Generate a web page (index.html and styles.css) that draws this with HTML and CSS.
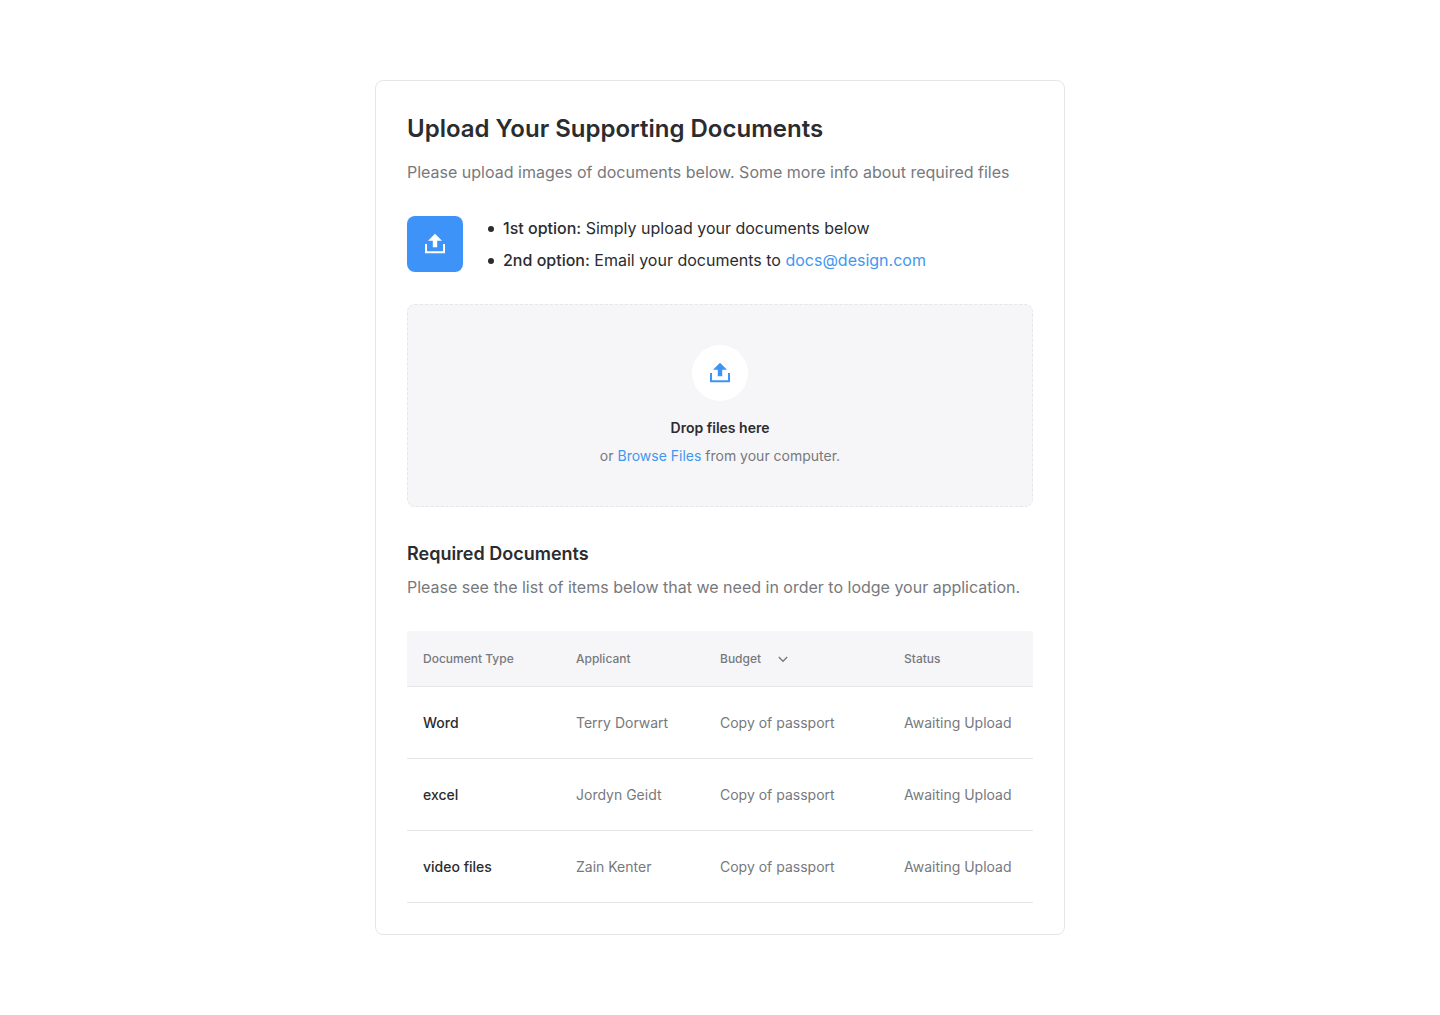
FILE: index.html
```html
<!DOCTYPE html>
<html lang="en">
<head>
<meta charset="utf-8">
<meta name="viewport" content="width=device-width, initial-scale=1">
<title>Upload Your Supporting Documents</title>
<link rel="stylesheet" href="styles.css">
</head>
<body>
<main class="card">
  <header class="intro">
    <h1 class="title">Upload Your Supporting Documents</h1>
    <p class="lead">Please upload images of documents below. Some more info about required files</p>
  </header>
  <section class="options">
    <div class="badge">
      <svg class="icon" viewBox="0 0 24 24" aria-hidden="true"><path d="M12 1.8 19 8.8H14.2V15.2H9.8V8.8H5Z" fill="currentColor"/><path d="M3 12V20.2H21V12" fill="none" stroke="currentColor" stroke-width="2"/></svg>
    </div>
    <ul class="option-list">
      <li><strong>1st option:</strong> Simply upload your documents below</li>
      <li><strong>2nd option:</strong> Email your documents to <a class="link" href="mailto:docs@design.com">docs@design.com</a></li>
    </ul>
  </section>
  <section class="dropzone">
    <div class="drop-icon">
      <svg class="icon" viewBox="0 0 24 24" aria-hidden="true"><path d="M12 1.8 19 8.8H14.2V15.2H9.8V8.8H5Z" fill="currentColor"/><path d="M3 12V20.2H21V12" fill="none" stroke="currentColor" stroke-width="2"/></svg>
    </div>
    <p class="drop-title">Drop files here</p>
    <p class="drop-text">or <button class="browse" type="button">Browse Files</button> from your computer.</p>
  </section>
  <section class="required">
    <h2 class="subtitle">Required Documents</h2>
    <p class="lead">Please see the list of items below that we need in order to lodge your application.</p>
    <table class="documents">
      <colgroup><col class="col-type"><col class="col-applicant"><col class="col-budget"><col class="col-status"></colgroup>
      <thead>
        <tr>
          <th scope="col">Document Type</th>
          <th scope="col">Applicant</th>
          <th scope="col"><button class="sort" type="button">Budget <svg class="chevron" viewBox="0 0 12 12" aria-hidden="true"><path d="M1.8 4 6 8.2 10.2 4" fill="none" stroke="currentColor" stroke-width="1.4"/></svg></button></th>
          <th scope="col">Status</th>
        </tr>
      </thead>
      <tbody>
        <tr><th scope="row">Word</th><td>Terry Dorwart</td><td>Copy of passport</td><td>Awaiting Upload</td></tr>
        <tr><th scope="row">excel</th><td>Jordyn Geidt</td><td>Copy of passport</td><td>Awaiting Upload</td></tr>
        <tr><th scope="row">video files</th><td>Zain Kenter</td><td>Copy of passport</td><td>Awaiting Upload</td></tr>
      </tbody>
    </table>
  </section>
</main>
</body>
</html>
```
FILE: styles.css
```css
* { box-sizing: border-box; }

body {
  margin: 0;
  padding: 80px 24px;
  background: #fff;
  color: #2b2c2f;
  font-family: Inter, "Liberation Sans", sans-serif;
  font-size: 16px;
  line-height: 24px;
}

h1, h2, p, ul { margin: 0; }

button {
  padding: 0;
  border: 0;
  background: none;
  color: inherit;
  font: inherit;
  cursor: pointer;
}

.card {
  max-width: 690px;
  margin: 0 auto;
  padding: 31px;
  border: 1px solid #e6e6e8;
  border-radius: 8px;
}

.title {
  margin-bottom: 14px;
  font-size: 24px;
  font-weight: 600;
  line-height: 34px;
}

.lead { color: #77797d; }

.options {
  display: flex;
  gap: 24px;
  margin: 32px 0;
}

.badge, .drop-icon {
  display: flex;
  flex: none;
  align-items: center;
  justify-content: center;
  width: 56px;
  height: 56px;
}

.badge {
  border-radius: 8px;
  background: #3e93f9;
  color: #fff;
}

.icon { width: 24px; height: 24px; }

.option-list {
  display: grid;
  gap: 8px;
  padding: 0;
  list-style: none;
}

.option-list li::before {
  content: "";
  display: inline-block;
  width: 6px;
  height: 6px;
  margin: 0 9px 0 1px;
  border-radius: 50%;
  background: currentColor;
  vertical-align: 2px;
}

.option-list strong { font-weight: 500; }

.link, .browse {
  color: #4297f0;
  text-decoration: none;
}

.dropzone {
  display: flex;
  flex-direction: column;
  align-items: center;
  padding: 40px 16px;
  border: 1px dashed #e6e6e8;
  border-radius: 8px;
  background: #f6f6f8;
  font-size: 14px;
  line-height: 20px;
}

.drop-icon {
  margin-bottom: 17px;
  border-radius: 50%;
  background: #fff;
  color: #3e93f9;
}

.drop-title {
  margin-bottom: 8px;
  font-weight: 600;
}

.drop-text { color: #77797d; }

.required { margin-top: 32px; }

.subtitle {
  margin-bottom: 6px;
  font-size: 18px;
  font-weight: 600;
  line-height: 30px;
}

.documents {
  width: 100%;
  margin-top: 32px;
  border-collapse: separate;
  border-spacing: 0;
  table-layout: fixed;
  color: #77797d;
  font-size: 14px;
  line-height: 20px;
  text-align: left;
}

.col-type { width: 153px; }
.col-applicant { width: 144px; }
.col-budget { width: 184px; }

.documents th, .documents td {
  height: 72px;
  padding: 0 16px;
  border-bottom: 1px solid #e6e6e8;
}

.documents thead th {
  height: 56px;
  background: #f6f6f8;
  font-size: 12px;
  font-weight: 500;
}

.documents thead th:first-child { border-top-left-radius: 4px; }
.documents thead th:last-child { border-top-right-radius: 4px; }

.documents tbody th {
  color: #2b2c2f;
  font-weight: 500;
}

.sort {
  display: flex;
  gap: 16px;
  align-items: center;
}

.chevron { width: 12px; height: 12px; }
```
